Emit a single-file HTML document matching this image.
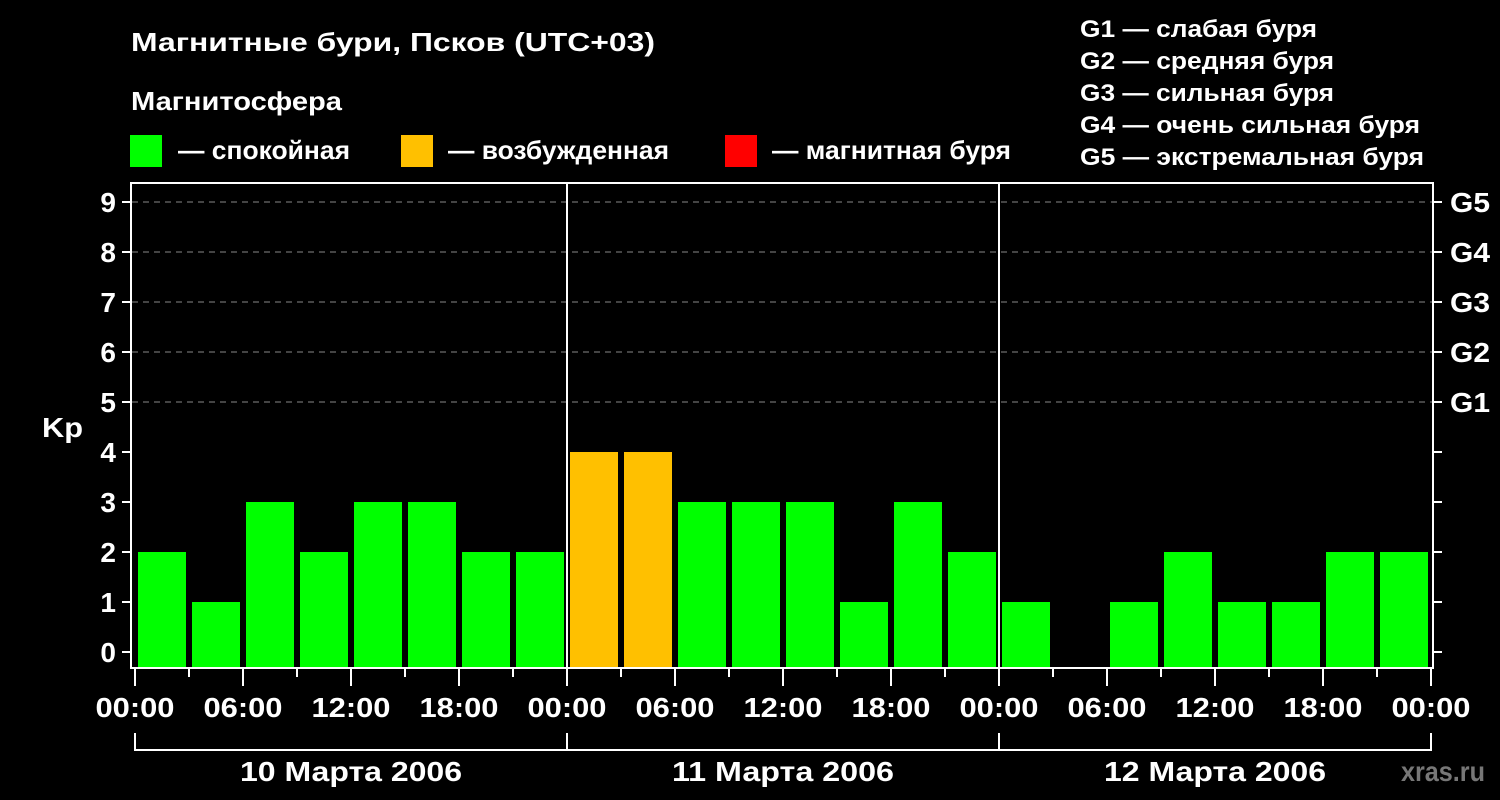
<!DOCTYPE html>
<html><head><meta charset="utf-8"><style>
html,body{margin:0;padding:0;background:#000;width:1500px;height:800px;overflow:hidden}
svg text{font-family:"Liberation Sans",Arial,sans-serif;font-weight:bold;fill:#fff}
</style></head><body>
<svg width="1500" height="800" viewBox="0 0 1500 800" xmlns="http://www.w3.org/2000/svg">
<rect width="1500" height="800" fill="#000"/>
<text x="131" y="51" font-size="26" textLength="524" lengthAdjust="spacingAndGlyphs">Магнитные бури, Псков (UTC+03)</text>
<text x="131" y="110" font-size="26" textLength="211" lengthAdjust="spacingAndGlyphs">Магнитосфера</text>
<rect x="130" y="135" width="32" height="32" fill="#00ff00"/>
<text x="178" y="159" font-size="26" textLength="172" lengthAdjust="spacingAndGlyphs">— спокойная</text>
<rect x="401" y="135" width="32" height="32" fill="#ffc000"/>
<text x="448" y="159" font-size="26" textLength="221" lengthAdjust="spacingAndGlyphs">— возбужденная</text>
<rect x="725" y="135" width="32" height="32" fill="#ff0000"/>
<text x="772" y="159" font-size="26" textLength="239" lengthAdjust="spacingAndGlyphs">— магнитная буря</text>
<g font-size="24">
<text x="1080" y="37" textLength="237" lengthAdjust="spacingAndGlyphs">G1 — слабая буря</text>
<text x="1080" y="69" textLength="254" lengthAdjust="spacingAndGlyphs">G2 — средняя буря</text>
<text x="1080" y="101" textLength="254" lengthAdjust="spacingAndGlyphs">G3 — сильная буря</text>
<text x="1080" y="133" textLength="340" lengthAdjust="spacingAndGlyphs">G4 — очень сильная буря</text>
<text x="1080" y="165" textLength="344" lengthAdjust="spacingAndGlyphs">G5 — экстремальная буря</text>
</g>
<g stroke="#888" stroke-width="1" stroke-dasharray="6,5">
<line x1="132" y1="202" x2="1432" y2="202"/>
<line x1="132" y1="252" x2="1432" y2="252"/>
<line x1="132" y1="302" x2="1432" y2="302"/>
<line x1="132" y1="352" x2="1432" y2="352"/>
<line x1="132" y1="402" x2="1432" y2="402"/>
</g>
<g>
<rect x="138" y="552" width="48" height="116" fill="#00ff00"/>
<rect x="192" y="602" width="48" height="66" fill="#00ff00"/>
<rect x="246" y="502" width="48" height="166" fill="#00ff00"/>
<rect x="300" y="552" width="48" height="116" fill="#00ff00"/>
<rect x="354" y="502" width="48" height="166" fill="#00ff00"/>
<rect x="408" y="502" width="48" height="166" fill="#00ff00"/>
<rect x="462" y="552" width="48" height="116" fill="#00ff00"/>
<rect x="516" y="552" width="48" height="116" fill="#00ff00"/>
<rect x="570" y="452" width="48" height="216" fill="#ffc000"/>
<rect x="624" y="452" width="48" height="216" fill="#ffc000"/>
<rect x="678" y="502" width="48" height="166" fill="#00ff00"/>
<rect x="732" y="502" width="48" height="166" fill="#00ff00"/>
<rect x="786" y="502" width="48" height="166" fill="#00ff00"/>
<rect x="840" y="602" width="48" height="66" fill="#00ff00"/>
<rect x="894" y="502" width="48" height="166" fill="#00ff00"/>
<rect x="948" y="552" width="48" height="116" fill="#00ff00"/>
<rect x="1002" y="602" width="48" height="66" fill="#00ff00"/>
<rect x="1110" y="602" width="48" height="66" fill="#00ff00"/>
<rect x="1164" y="552" width="48" height="116" fill="#00ff00"/>
<rect x="1218" y="602" width="48" height="66" fill="#00ff00"/>
<rect x="1272" y="602" width="48" height="66" fill="#00ff00"/>
<rect x="1326" y="552" width="48" height="116" fill="#00ff00"/>
<rect x="1380" y="552" width="48" height="116" fill="#00ff00"/>
</g>
<rect x="131" y="183" width="1302" height="485" fill="none" stroke="#fff" stroke-width="2"/>
<line x1="567" y1="183" x2="567" y2="668" stroke="#fff" stroke-width="2"/>
<line x1="999" y1="183" x2="999" y2="668" stroke="#fff" stroke-width="2"/>
<g stroke="#fff" stroke-width="2">
<path d="M122 202H131M122 252H131M122 302H131M122 352H131M122 402H131M122 452H131M122 502H131M122 552H131M122 602H131M122 652H131"/>
<path d="M1433 202H1442M1433 252H1442M1433 302H1442M1433 352H1442M1433 402H1442M1433 452H1442M1433 502H1442M1433 552H1442M1433 602H1442M1433 652H1442"/>
<path d="M135 669V686M189 669V677M243 669V686M297 669V677M351 669V686M405 669V677M459 669V686M513 669V677M567 669V686M621 669V677M675 669V686M729 669V677M783 669V686M837 669V677M891 669V686M945 669V677M999 669V686M1053 669V677M1107 669V686M1161 669V677M1215 669V686M1269 669V677M1323 669V686M1377 669V677M1431 669V686"/>
<path d="M135 733V750H1431V733M567 733V750M999 733V750" fill="none"/>
</g>
<g font-size="28" text-anchor="end">
<text x="116" y="212">9</text><text x="116" y="262">8</text><text x="116" y="312">7</text>
<text x="116" y="362">6</text><text x="116" y="412">5</text><text x="116" y="462">4</text>
<text x="116" y="512">3</text><text x="116" y="562">2</text><text x="116" y="612">1</text>
<text x="116" y="662">0</text>
</g>
<text x="42" y="437" font-size="28" textLength="41" lengthAdjust="spacingAndGlyphs">Kp</text>
<g font-size="28">
<text x="1450" y="212" textLength="40" lengthAdjust="spacingAndGlyphs">G5</text>
<text x="1450" y="262" textLength="40" lengthAdjust="spacingAndGlyphs">G4</text>
<text x="1450" y="312" textLength="40" lengthAdjust="spacingAndGlyphs">G3</text>
<text x="1450" y="362" textLength="40" lengthAdjust="spacingAndGlyphs">G2</text>
<text x="1450" y="412" textLength="40" lengthAdjust="spacingAndGlyphs">G1</text>
</g>
<g font-size="28" text-anchor="middle">
<text x="135" y="717" textLength="79" lengthAdjust="spacingAndGlyphs">00:00</text><text x="243" y="717" textLength="79" lengthAdjust="spacingAndGlyphs">06:00</text><text x="351" y="717" textLength="79" lengthAdjust="spacingAndGlyphs">12:00</text><text x="459" y="717" textLength="79" lengthAdjust="spacingAndGlyphs">18:00</text>
<text x="567" y="717" textLength="79" lengthAdjust="spacingAndGlyphs">00:00</text><text x="675" y="717" textLength="79" lengthAdjust="spacingAndGlyphs">06:00</text><text x="783" y="717" textLength="79" lengthAdjust="spacingAndGlyphs">12:00</text><text x="891" y="717" textLength="79" lengthAdjust="spacingAndGlyphs">18:00</text>
<text x="999" y="717" textLength="79" lengthAdjust="spacingAndGlyphs">00:00</text><text x="1107" y="717" textLength="79" lengthAdjust="spacingAndGlyphs">06:00</text><text x="1215" y="717" textLength="79" lengthAdjust="spacingAndGlyphs">12:00</text><text x="1323" y="717" textLength="79" lengthAdjust="spacingAndGlyphs">18:00</text>
<text x="1431" y="717" textLength="79" lengthAdjust="spacingAndGlyphs">00:00</text>
<text x="351" y="781" textLength="222" lengthAdjust="spacingAndGlyphs">10 Марта 2006</text>
<text x="783" y="781" textLength="222" lengthAdjust="spacingAndGlyphs">11 Марта 2006</text>
<text x="1215" y="781" textLength="222" lengthAdjust="spacingAndGlyphs">12 Марта 2006</text>
</g>
<text x="1401" y="781" font-size="28" textLength="84" lengthAdjust="spacingAndGlyphs" style="fill:#777">xras.ru</text>
</svg>
</body></html>
